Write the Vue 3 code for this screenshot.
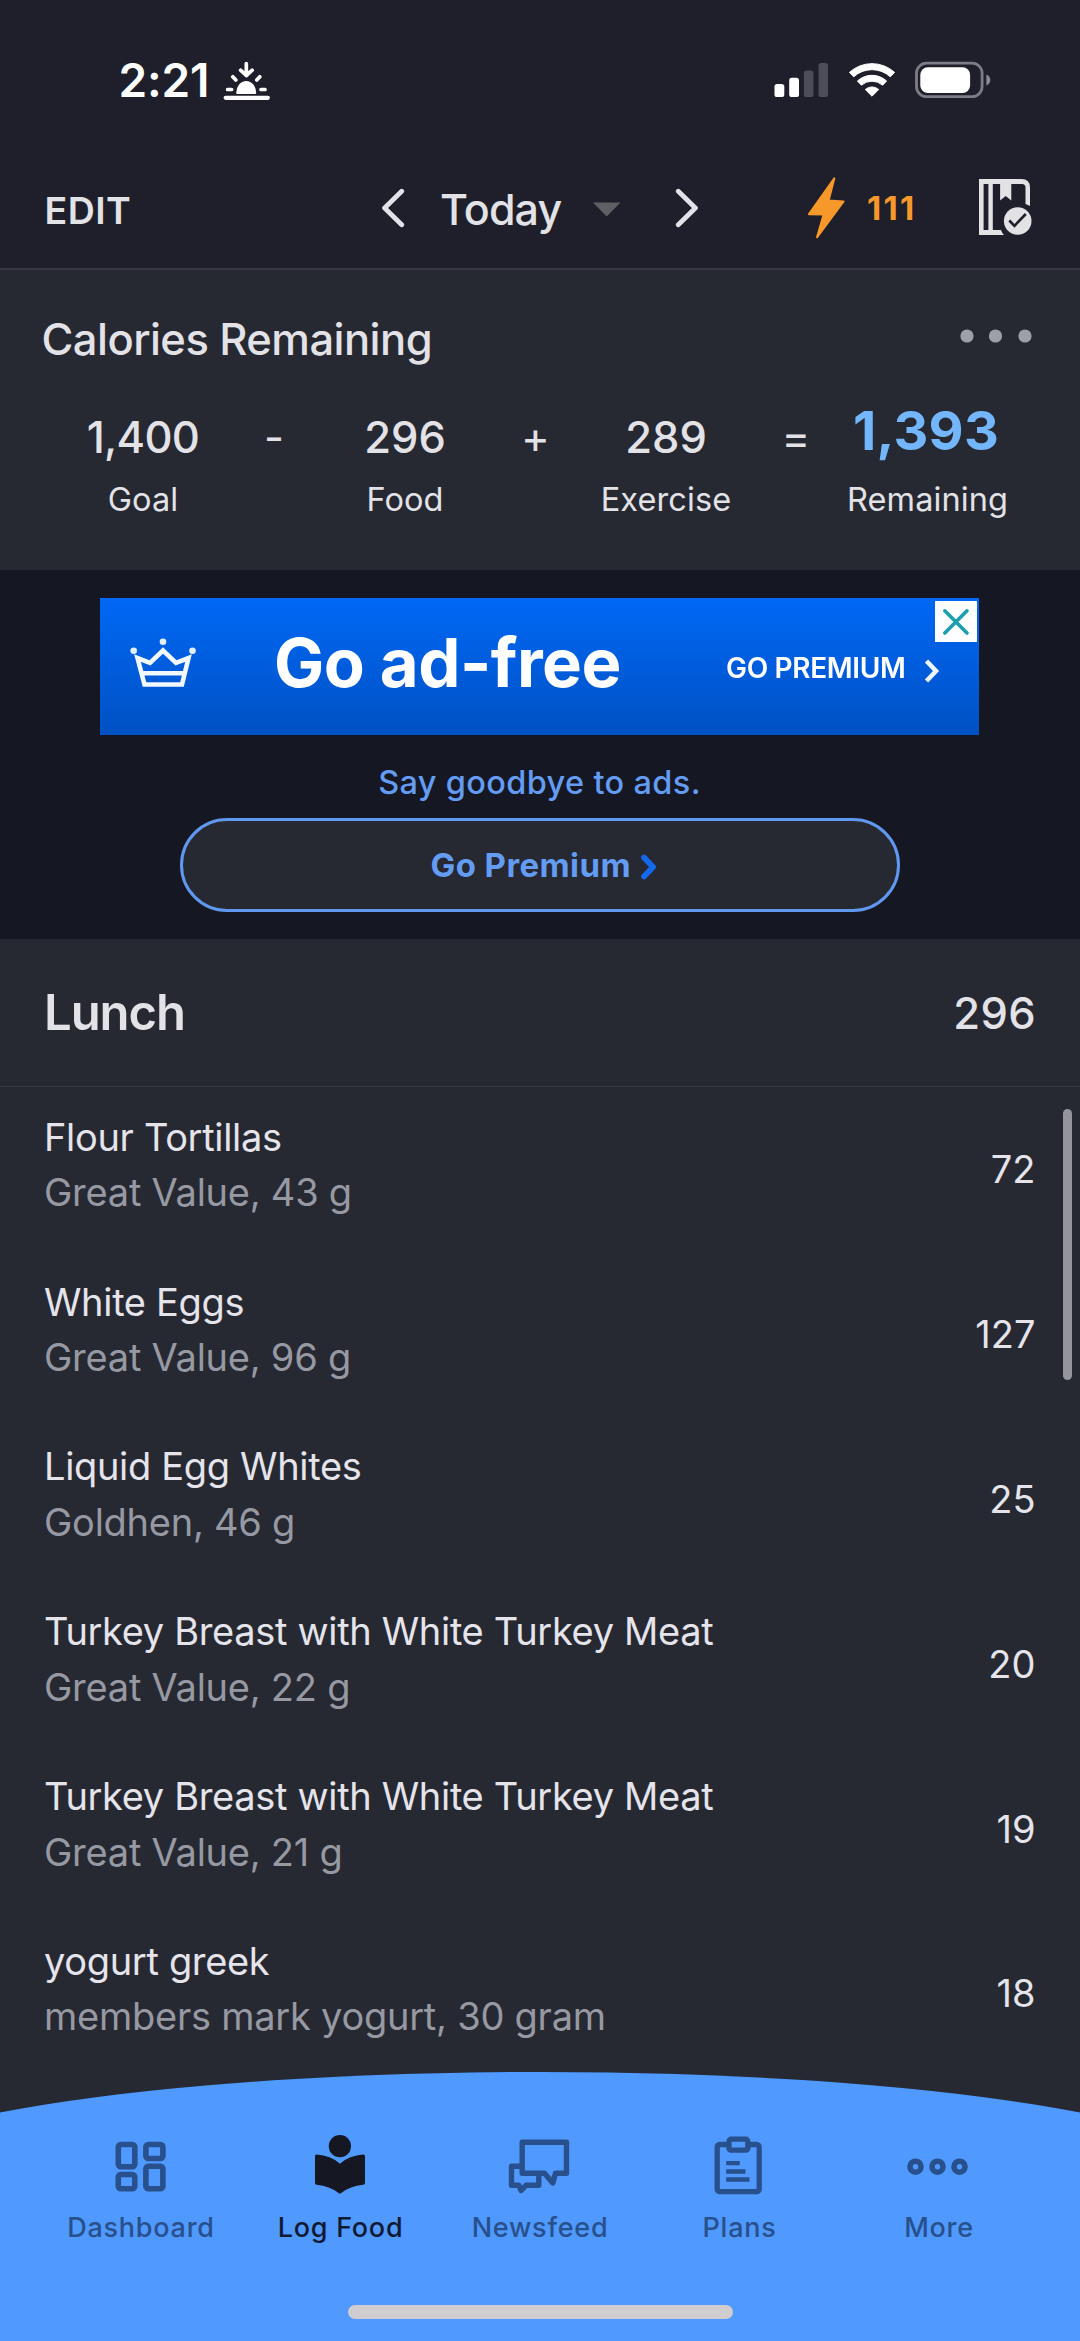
<script setup>
const equation = [
  { value: '1,400', label: 'Goal', op: '-' },
  { value: '296', label: 'Food', op: '+' },
  { value: '289', label: 'Exercise', op: '=' },
  { value: '1,393', label: 'Remaining', total: true },
]

const foods = [
  { name: 'Flour Tortillas', detail: 'Great Value, 43 g', calories: 72 },
  { name: 'White Eggs', detail: 'Great Value, 96 g', calories: 127 },
  { name: 'Liquid Egg Whites', detail: 'Goldhen, 46 g', calories: 25 },
  { name: 'Turkey Breast with White Turkey Meat', detail: 'Great Value, 22 g', calories: 20 },
  { name: 'Turkey Breast with White Turkey Meat', detail: 'Great Value, 21 g', calories: 19 },
  { name: 'yogurt greek', detail: 'members mark yogurt, 30 gram', calories: 18 },
]

const tabs = [
  { id: 'dashboard', label: 'Dashboard' },
  { id: 'log', label: 'Log Food', active: true },
  { id: 'news', label: 'Newsfeed' },
  { id: 'plans', label: 'Plans' },
  { id: 'more', label: 'More' },
]
</script>

<template>
  <div class="screen">
    <div class="status">
      <span class="clock">2:21</span>
      <svg class="sunset" width="50" height="42" viewBox="222 59 50 42" fill="none" stroke="#fff" stroke-linecap="round" stroke-linejoin="round">
        <path d="M225.7 97.8H267.8" stroke-width="4.3" />
        <path d="M237.2 93a9 11 0 0 1 18 0z" fill="#fff" stroke-width="2" />
        <path d="M246.3 63.5V74M240.6 70.2l5.7 5.3 5.9-5.3M232.8 76.8l3 3.2M259.8 76.8l-3 3.2M227.6 89.5h4M261 89.5h4" stroke-width="3.7" />
      </svg>
      <svg class="signal" width="54" height="36" viewBox="774 62 54 36">
        <rect x="774.5" y="84" width="9.8" height="13" rx="2.6" fill="#fff" />
        <rect x="789.2" y="77.8" width="9.8" height="19.2" rx="2.6" fill="#fff" />
        <rect x="803.9" y="70.6" width="9.6" height="26.4" rx="2.6" fill="#4c4d58" />
        <rect x="818.5" y="63" width="9.5" height="34" rx="2.6" fill="#4c4d58" />
      </svg>
      <svg class="wifi" width="50" height="36" viewBox="-25 -35 50 36" fill="#fff" stroke="#fff" stroke-width="1" stroke-linejoin="round">
        <path d="M-22.6-24.6A33.5 33.5 0 0 1 22.6-24.6L18.3-20.2A27 27 0 0 0-18.3-20.2Z" />
        <path d="M-14.6-16A21.6 21.6 0 0 1 14.6-16L10.6-11.8A16 16 0 0 0-10.6-11.8Z" />
        <path d="M-6.7-7.5A10 10 0 0 1 6.7-7.5L0-.8Z" />
      </svg>
      <svg class="battery" width="77" height="38" viewBox="914 61 77 38">
        <rect x="916.5" y="63.2" width="65.6" height="33.4" rx="10" fill="none" stroke="#7b7c87" stroke-width="2.8" />
        <rect x="920.3" y="67.3" width="49.8" height="25.6" rx="7.5" fill="#fff" />
        <path d="M986.4 74.6c5.2 2 5.2 9 0 11z" fill="#8a8b94" />
      </svg>
    </div>

    <header class="topbar">
      <span class="edit">EDIT</span>
      <svg class="prev" width="26" height="40" viewBox="380 188 26 40" fill="none" stroke="#e2e2e8" stroke-width="4.8" stroke-linecap="round" stroke-linejoin="round">
        <path d="M401.7 191.3L384.6 208l17.1 16.7" />
      </svg>
      <span class="today">Today</span>
      <svg class="caret" width="28" height="15" viewBox="0 0 28 15"><path d="M0 .5H27.5L13.7 14.5Z" fill="#5e6063" /></svg>
      <svg class="next" width="26" height="40" viewBox="674 188 26 40" fill="none" stroke="#e2e2e8" stroke-width="4.8" stroke-linecap="round" stroke-linejoin="round">
        <path d="M678.3 191.3L695.4 208l-17.1 16.7" />
      </svg>
      <svg class="bolt" width="40" height="64" viewBox="806 176 40 64" fill="#f7982a" stroke="#f7982a" stroke-width="2" stroke-linejoin="round">
        <path d="M834.3 178.4L828.6 200.6 843.6 201.4 817 237.3 823.6 214.6 809 214.2Z" />
      </svg>
      <span class="streak">111</span>
      <svg class="diary" width="58" height="60" viewBox="976 178 58 60">
        <path d="M978 179h42.5q8.5 0 8.5 8.5V206q-2-1.2-4.500-2V187.500q0-3.500-3.500-3.500H1010.300V200.500l-5.600-4.500-5.600 4.500V184H991.800V230H1000q1 3 3 5H978ZM982.600 184V230H987.400V184Z" fill="#e2e2e4" fill-rule="evenodd" />
        <circle cx="1016.7" cy="221" r="13.8" fill="#e2e2e4" />
        <path d="M1008.3 220.5l5.2 5.3 11.3-11.8" fill="none" stroke="#1e1f2a" stroke-width="2.6" />
      </svg>
    </header>

    <section class="summary">
      <div class="summary-head">
        <h2>Calories Remaining</h2>
        <svg width="72" height="14" viewBox="960 328.5 72 14" fill="#9da0a8">
          <circle cx="967" cy="335.5" r="6.6" /><circle cx="995.5" cy="335.5" r="6.6" /><circle cx="1025" cy="335.5" r="6.6" />
        </svg>
      </div>
      <div class="equation">
        <template v-for="e in equation" :key="e.label">
          <div class="term" :class="{ total: e.total }">
            <b>{{ e.value }}</b>
            <span>{{ e.label }}</span>
          </div>
          <i v-if="e.op">{{ e.op }}</i>
        </template>
      </div>
    </section>

    <section class="promo">
      <div class="banner">
        <svg class="crown" width="68" height="50" viewBox="-1 -1 68 50" fill="none" stroke="#f2f8ff" stroke-width="4.6">
          <path d="M7.5 19L14.5 45.5H52L58.5 19 46 23.8 33 11.5 20 23.8ZM11 34.200H55.500" />
          <g fill="#e4f1ff" stroke="none"><circle cx="33" cy="2.8" r="3.3" /><circle cx="3.7" cy="11.7" r="3.3" /><circle cx="62.5" cy="11.7" r="3.3" /></g>
        </svg>
        <span class="adfree">Go ad-free</span>
        <span class="cta">GO PREMIUM</span>
        <svg class="cta-arrow" width="16" height="26" viewBox="0 0 16 26" fill="none" stroke="#eef5ff" stroke-width="4.6"><path d="M2.5 3L12 13 2.5 23" /></svg>
        <div class="close">
          <svg width="42" height="42" viewBox="0 0 42 42" stroke="#1c9fad" stroke-width="3.6" stroke-linecap="round"><path d="M9.8 9.8L32 32M32 9.8L9.8 32" /></svg>
        </div>
      </div>
      <p class="tagline">Say goodbye to ads.</p>
      <div class="pill">
        <span>Go Premium</span>
        <svg width="18" height="28" viewBox="0 0 18 28" fill="none" stroke="#1468ea" stroke-width="5.8" stroke-linecap="round" stroke-linejoin="round"><path d="M4 4.5L13 14 4 23.5" /></svg>
      </div>
    </section>

    <section class="meal">
      <div class="meal-head">
        <h3>Lunch</h3>
        <span>296</span>
      </div>
      <ul>
        <li v-for="(f, i) in foods" :key="i">
          <div class="food">
            <p>{{ f.name }}</p>
            <p class="detail">{{ f.detail }}</p>
          </div>
          <span class="kcal">{{ f.calories }}</span>
        </li>
      </ul>
      <div class="scrollbar"></div>
    </section>

    <nav>
      <svg class="arc" width="1080" height="42" viewBox="0 0 1080 42"><ellipse cx="540" cy="110" rx="697" ry="110" fill="#4f99ff" /></svg>
      <div class="tabs">
        <div v-for="t in tabs" :key="t.id" class="tab" :class="{ active: t.active }">
          <svg v-if="t.id === 'dashboard'" width="64" height="64" viewBox="108.5 2134.5 64 64" fill="none" stroke="#28508c" stroke-width="5.6">
            <rect x="118.8" y="2144" width="16.500" height="22.3" rx="2.5" />
            <rect x="146.4" y="2144" width="17" height="14" rx="2.5" />
            <rect x="118.8" y="2174" width="16.500" height="14.3" rx="2.5" />
            <rect x="146.4" y="2165.8" width="17" height="22.5" rx="2.5" />
          </svg>
          <svg v-else-if="t.id === 'log'" width="64" height="64" viewBox="308 2134.5 64 64" fill="#151722">
            <circle cx="339.9" cy="2145.7" r="11.1" />
            <path d="M315 2155.7q0-1.7 1.8-1.6Q330.5 2155 339.9 2163.2 349.5 2155 363.2 2154.1q1.8-.1 1.8 1.6V2182.5q0 1.6-1.8 1.8Q350 2185.5 341.3 2192.5q-1.4 1.1-2.8 0Q329.5 2185.5 316.8 2184.3q-1.800-.2-1.800-1.800Z" />
          </svg>
          <svg v-else-if="t.id === 'news'" width="64" height="64" viewBox="507.5 2134.5 64 64" fill="none" stroke="#28508c" stroke-width="5.4" stroke-linejoin="round">
            <path d="M522.7 2141.7H567V2172.7H556L553.3 2182.5 545 2172.7H522.7Z" />
            <path d="M522 2165.7H512V2184.7H519.3L521.5 2190 526.7 2184.7H539.3V2174" />
          </svg>
          <svg v-else-if="t.id === 'plans'" width="64" height="64" viewBox="706.5 2134.5 64 64" fill="none" stroke="#28508c" stroke-width="5.3">
            <rect x="716.7" y="2144" width="42" height="47.2" rx="2.5" />
            <rect x="728.5" y="2138.7" width="18.8" height="11" rx="2" fill="#4f99ff" />
            <path d="M725.7 2162.7H739.3M725.7 2171H745M725.7 2179H749" stroke-width="4.3" />
          </svg>
          <svg v-else width="64" height="64" viewBox="906.5 2134.5 64 64" fill="none" stroke="#28508c" stroke-width="5.6">
            <circle cx="916" cy="2166.2" r="5.5" /><circle cx="938" cy="2166.2" r="5.5" /><circle cx="960" cy="2166.2" r="5.5" />
          </svg>
          <span>{{ t.label }}</span>
        </div>
      </div>
      <div class="home"></div>
    </nav>
  </div>
</template>

<style>
body { background: #1e1f2a; }
</style>

<style scoped>
.screen {
  width: 1080px;
  height: 2341px;
  display: flex;
  flex-direction: column;
  overflow: hidden;
  background: #1e1f2a;
  color: #e2e2e7;
  font-family: Inter, "Liberation Sans", sans-serif;
  white-space: nowrap;
}
.screen > * { flex-shrink: 0; box-sizing: border-box; }
svg { display: block; flex-shrink: 0; }
h2, h3, p, ul { margin: 0; padding: 0; font-weight: inherit; }

.status { height: 160px; display: flex; align-items: center; padding-left: 118.5px; color: #fff; }
.clock { width: 91px; font-size: 46px; font-weight: 600; letter-spacing: -0.16px; }
.sunset { margin-left: 12.5px; }
.signal { margin-left: 502px; }
.wifi { margin-left: 18.5px; }
.battery { margin-left: 17.5px; }

.topbar { height: 110px; display: flex; align-items: center; padding: 0 0 12px 44.5px; border-bottom: 2px solid #353740; }
.edit { width: 86.5px; padding-top: 4px; font-size: 37.5px; font-weight: 600; letter-spacing: 0.44px; }
.prev { margin-left: 249px; }
.today { width: 120px; margin-left: 34px; padding-top: 2px; font-size: 43px; font-weight: 500; letter-spacing: -0.9px; }
.caret { margin: 2px 0 0 33px; }
.next { margin-left: 53px; }
.bolt { margin-left: 106px; }
.streak { width: 50px; margin-left: 21px; color: #f7982a; font-size: 33px; font-weight: 700; letter-spacing: 2.27px; }
.diary { margin-left: 60px; }

.summary { height: 300px; background: #262832; }
.summary-head { height: 138px; display: flex; align-items: center; justify-content: space-between; padding: 0 48px 0 41.5px; }
.summary-head svg { margin-top: -7px; }
h2 { font-size: 43.5px; font-weight: 500; letter-spacing: -0.55px; }
.equation { display: grid; grid-template-columns: 158px 104px 158px 103px 158px 102px 158px; padding-left: 64px; margin-top: 2px; }
.equation b, .equation span, .equation i { display: block; text-align: center; font-style: normal; }
.term b { height: 54px; line-height: 54px; font-size: 43.5px; font-weight: 500; }
.term:first-child b { letter-spacing: -0.7px; }
.term span { margin-top: 9px; font-size: 32.5px; line-height: 54px; letter-spacing: 0.1px; }
.term.total b { height: 47.5px; line-height: 41px; font-size: 54px; font-weight: 700; letter-spacing: 0.25px; color: #74b6fb; }
.term.total span { margin-top: 15.5px; }
.equation i { line-height: 55px; font-size: 43.5px; }

.promo { height: 369px; background: #151722; display: flex; flex-direction: column; align-items: center; padding: 28px 1px 0 0; }
.banner { position: relative; width: 879px; height: 137px; display: flex; align-items: center; background: linear-gradient(#0068f5, #0051c3); color: #fff; }
.crown { margin: -7px 0 0 29px; filter: blur(0.5px); }
.adfree { width: 350px; margin-left: 77px; padding-bottom: 9px; font-size: 67px; font-weight: 700; letter-spacing: -0.49px; filter: blur(0.7px); }
.cta { width: 180px; margin-left: 102px; padding-top: 3px; font-size: 28px; font-weight: 600; letter-spacing: -0.33px; filter: blur(0.6px); }
.cta-arrow { margin: 8px 0 0 17.5px; filter: blur(0.5px); }
.close { position: absolute; top: 3px; right: 2px; width: 42px; height: 41px; background: #fff; }
.tagline { margin-top: 20px; line-height: 56px; color: #639cf2; font-size: 32.5px; font-weight: 500; letter-spacing: 0.35px; }
.pill { box-sizing: border-box; width: 720px; height: 94px; margin-top: 7px; display: flex; align-items: center; padding-left: 248px; background: #262832; border: 3px solid #5f98ee; border-radius: 47px; color: #639cf2; font-size: 33px; font-weight: 700; letter-spacing: 0.43px; }
.pill svg { margin: 3px 0 0 9px; }

.meal { position: relative; height: 1133px; overflow: hidden; background: #262832; }
.meal-head { box-sizing: border-box; height: 148px; display: flex; align-items: center; justify-content: space-between; padding: 0 44px; border-bottom: 1px solid #383a45; }
h3 { font-size: 49px; font-weight: 600; letter-spacing: -1.06px; }
.meal-head span { font-size: 43.5px; font-weight: 500; letter-spacing: 0.4px; }
ul { list-style: none; }
li { height: 164.8px; display: flex; align-items: center; justify-content: space-between; padding: 0 44px; font-size: 38px; color: #e4e4ea; }
.food { padding-bottom: 9px; line-height: 55.5px; letter-spacing: -0.33px; }
.detail { color: #9799a2; letter-spacing: -0.25px; line-height: 54.5px; }
.kcal { padding-right: 0.5px; }
.scrollbar { position: absolute; top: 170px; right: 8.5px; width: 8.5px; height: 271px; border-radius: 5px; background: #94969c; }

nav { height: 269px; background: #262832; }
.arc { margin-bottom: -1px; }
.tabs { height: 192px; box-sizing: border-box; display: flex; padding: 21.5px 0 0 40.5px; background: #4f99ff; }
.tab { width: 199.5px; display: flex; flex-direction: column; align-items: center; color: #28508c; font-size: 27px; font-weight: 500; letter-spacing: 0.75px; }
.tab span { padding-left: 1.5px; line-height: 57px; }
.tab.active { color: #121a33; }
.home { height: 36px; background: #4f99ff; display: flex; justify-content: center; }
.home::before { content: ""; width: 385px; height: 14px; border-radius: 7px; background: #cfcdd0; }
</style>
